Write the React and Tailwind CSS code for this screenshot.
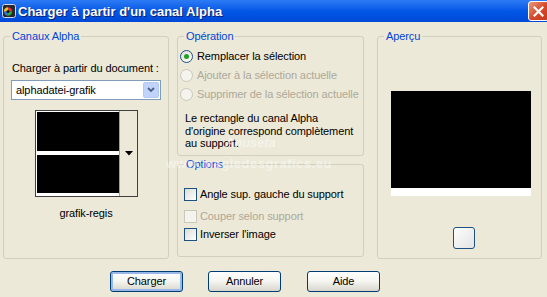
import React from "react";

function Radio({ checked, disabled, label }) {
  return (
    <div className="flex items-center h-[19px]">
      <span
        className={
          "w-[13px] h-[13px] rounded-full border flex items-center justify-center " +
          (disabled
            ? "border-[#CAC8BB] bg-[#F4F3EE]"
            : "border-[#1C5180] bg-linear-to-br from-[#DCDCD6] to-[#FFFFFF]")
        }
      >
        {checked && <span className="w-[5px] h-[5px] rounded-full bg-[#21A121]" />}
      </span>
      <span className={"ml-[4px] " + (disabled ? "text-[#ACA899]" : "text-black")}>{label}</span>
    </div>
  );
}

function Check({ disabled, label, className }) {
  return (
    <div className={"flex items-center h-[14px] " + (className || "")}>
      <span
        className={
          "w-[13px] h-[13px] border " +
          (disabled
            ? "border-[#CAC8BB] bg-[#F4F3EE]"
            : "border-[#1C5180] bg-linear-to-br from-[#DCDCD6] to-[#FFFFFF]")
        }
      />
      <span className={"ml-[3px] " + (disabled ? "text-[#ACA899]" : "text-black")}>{label}</span>
    </div>
  );
}

function Btn({ children, def }) {
  return (
    <div
      className={
        "w-[73px] h-[21px] rounded-[3px] border border-[#003C74] flex items-center justify-center bg-linear-to-b from-[#FFFFFF] via-[#F4F4F0] to-[#D8D6CB] " +
        (def ? "shadow-[inset_0_0_0_2px_#98B8EA]" : "")
      }
    >
      {children}
    </div>
  );
}

export default function App() {
  return (
    <div className="w-[547px] h-[297px] bg-[#ECE9D8] flex flex-col overflow-hidden relative font-['Liberation_Sans',Arial,sans-serif] text-[11px] text-black leading-[13px] tracking-[-0.1px]">
      {/* Title bar */}
      <div className="h-[22px] shrink-0 flex items-center bg-linear-to-b from-[#2C7BF5] via-[#0457E6] to-[#0049D6] relative">
        <svg width="14" height="14" viewBox="0 0 14 14" className="ml-[2px]">
          <rect x="0.5" y="0.5" width="13" height="13" rx="2" fill="#2a2a2a" stroke="#cfd8e8" />
          <circle cx="6" cy="7.5" r="4.2" fill="#111" />
          <path d="M6 3.3 A4.2 4.2 0 0 1 10.2 7.5 L6 7.5 Z" fill="#e03a3a" />
          <path d="M10.2 7.5 A4.2 4.2 0 0 1 6 11.7 L6 7.5 Z" fill="#2fae3c" />
          <path d="M6 11.7 A4.2 4.2 0 0 1 1.8 7.5 L6 7.5 Z" fill="#3a6fe0" />
          <path d="M1.8 7.5 A4.2 4.2 0 0 1 6 3.3 L6 7.5 Z" fill="#e0c43a" />
          <circle cx="6" cy="7.5" r="1.5" fill="#111" />
        </svg>
        <span className="ml-[2px] text-white font-bold text-[13px] tracking-[0px] font-['Liberation_Sans',Arial,sans-serif] [text-shadow:1px_1px_0_#0A1D6E]">
          Charger à partir d'un canal Alpha
        </span>
        <div className="absolute left-[528px] top-[1px] w-[21px] h-[20px] rounded-[3px] border border-white bg-linear-to-br from-[#E89A7E] via-[#D8492A] to-[#C33A1C] flex items-center justify-center">
          <svg width="11" height="11" viewBox="0 0 11 11">
            <path d="M1.5 1.5 L9.5 9.5 M9.5 1.5 L1.5 9.5" stroke="white" strokeWidth="2.2" strokeLinecap="square" />
          </svg>
        </div>
      </div>

      {/* Body */}
      <div className="flex pl-[3px] pt-[8px]">
        {/* Canaux Alpha */}
        <fieldset className="w-[166px] h-[229px] border border-[#D0D0BF] rounded-[3px] flex flex-col">
          <legend className="ml-[6px] px-[2px] text-[#0046D5]">Canaux Alpha</legend>
          <div className="ml-[8px] mt-[19px]">Charger à partir du document :</div>
          <div className="ml-[7px] mt-[5px] w-[150px] h-[20px] bg-white border border-[#7F9DB9] flex items-center">
            <span className="ml-[4px] flex-1">alphadatei-grafik</span>
            <span className="w-[16px] h-[16px] mr-[1px] rounded-[2px] bg-[#C1D3FB] border border-[#B4C8F6] flex items-center justify-center">
              <svg width="8" height="6" viewBox="0 0 8 6">
                <path d="M1 1 L4 4 L7 1" fill="none" stroke="#4D6185" strokeWidth="1.8" />
              </svg>
            </span>
          </div>
          <div className="ml-[31px] mt-[10px] w-[103px] h-[87px] border border-[#404040] bg-white flex">
            <div className="w-[83px] flex flex-col pl-[1px] pt-[1px]">
              <div className="h-[39px] bg-black" />
              <div className="h-[4px] bg-white" />
              <div className="h-[38px] bg-black" />
            </div>
            <div className="flex-1 bg-[#ECE9D8] border-l border-[#A0A0A0] flex flex-col items-center">
              <svg width="8" height="5" viewBox="0 0 8 5" className="mt-[40px]">
                <path d="M0 0 H8 L4 4.5 Z" fill="black" />
              </svg>
            </div>
          </div>
          <div className="mt-[10px] text-center">grafik-regis</div>
        </fieldset>

        {/* Middle column */}
        <div className="ml-[8px] w-[187px] flex flex-col">
          <fieldset className="h-[126px] border border-[#D0D0BF] rounded-[3px]">
            <legend className="ml-[6px] px-[2px] text-[#0046D5]">Opération</legend>
            <div className="ml-[2px] mt-[4px] flex flex-col">
              <Radio checked label="Remplacer la sélection" />
              <Radio disabled label="Ajouter à la sélection actuelle" />
              <Radio disabled label="Supprimer de la sélection actuelle" />
            </div>
            <div className="ml-[7px] mt-[8px] leading-[12.5px]">
              Le rectangle du canal Alpha
              <br />
              d'origine correspond complètement
              <br />
              au support.
            </div>
          </fieldset>
          <fieldset className="mt-[2px] h-[99px] border border-[#D0D0BF] rounded-[3px]">
            <legend className="ml-[6px] px-[2px] text-[#0046D5]">Options</legend>
            <div className="ml-[6px] mt-[16px] flex flex-col">
              <Check label="Angle sup. gauche du support" />
              <Check disabled label="Couper selon support" className="mt-[8px]" />
              <Check label="Inverser l'image" className="mt-[4px]" />
            </div>
          </fieldset>
        </div>

        {/* Aperçu */}
        <fieldset className="ml-[13px] w-[165px] h-[229px] border border-[#D0D0BF] rounded-[3px] flex flex-col">
          <legend className="ml-[6px] px-[2px] text-[#0046D5]">Aperçu</legend>
          <div className="ml-[13px] mt-[48px] w-[140px] h-[105px] bg-white flex flex-col">
            <div className="h-[97px] bg-black" />
          </div>
          <div className="ml-[75px] mt-[31px] w-[22px] h-[22px] rounded-[3px] border border-[#1C5180] bg-linear-to-br from-[#FFFFFF] via-[#F0F0F0] to-[#E4E4E4]" />
        </fieldset>
      </div>

      {/* Buttons */}
      <div className="flex pl-[110px] mt-[12px]">
        <Btn def>Charger</Btn>
        <div className="ml-[25px]">
          <Btn>Annuler</Btn>
        </div>
        <div className="ml-[26px]">
          <Btn>Aide</Btn>
        </div>
      </div>

      {/* watermark */}
      <div className="absolute left-[225px] top-[136px] text-[13px] font-bold italic text-white/50 pointer-events-none">
        Anuseta
      </div>
      <div className="absolute left-[166px] top-[157px] text-[13px] font-bold text-white/45 tracking-[0.5px] pointer-events-none">
        www.magiedesgrafics.eu
      </div>
    </div>
  );
}
